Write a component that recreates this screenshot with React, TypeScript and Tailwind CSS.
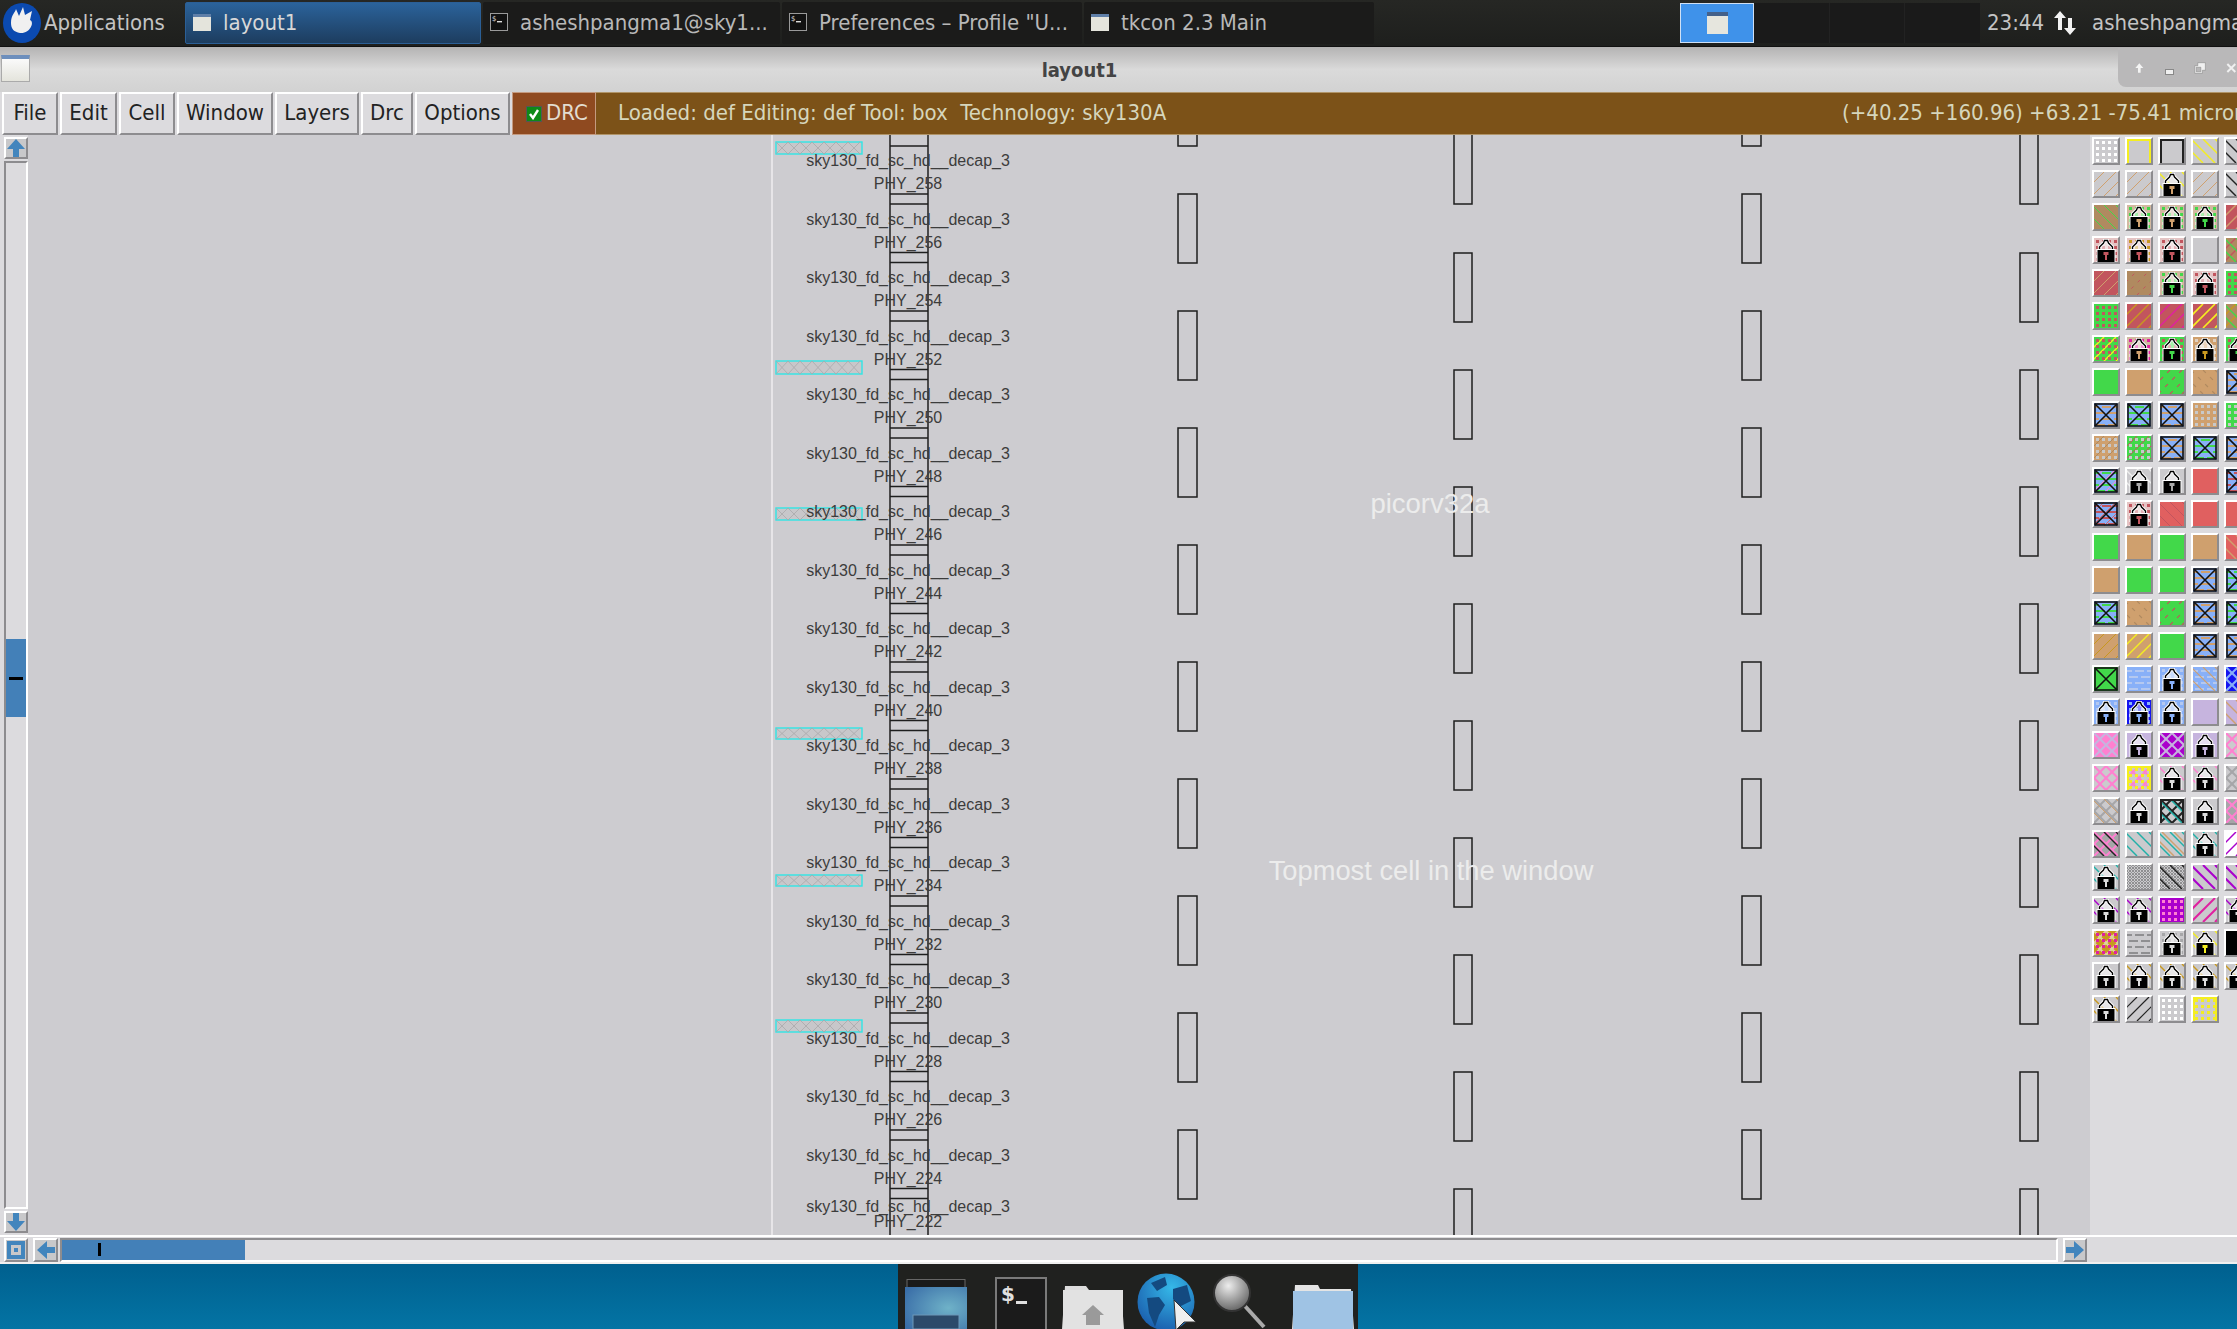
import React from 'react';

const bevel = "border-2 border-t-white border-l-white border-r-[#8d8c8f] border-b-[#8d8c8f]";

const G = '#42d84a', T = '#cfa06e', B = '#b08a60', R = '#c2555e', S = '#e06060', L = '#88b0f8', V = '#c6b4de',
    K = '#ff80d0', M = '#aa00cc', N = '#e020a0', Y = '#f4ee20', E = '#20b0a8', O = '#c89820', A = '#a6a6a8', Z = '#222222';

type Tile = {
    b?: string; f?: string[]; k?: string[]; w?: number; dash?: string; d?: string; h?: string; dense?: string;
    x?: boolean; l?: boolean; key?: string; fr?: string; hz?: string;
};

const X = (b: string, ...f: string[]): Tile => ({b: L, hz: b, f, w: 1, x: true});
const Lk = (b: string | undefined, d?: string, key?: string, k?: string[]): Tile => ({b, d, key, k, l: true});

const rows: Tile[][] = [
    [{d: '#fff'}, {fr: Y}, {fr: Z}, {k: [Y], w: 1.5}, {k: [Z], w: 1.5}],
    [{f: [T], w: 1}, {f: [T], w: 1}, Lk(undefined, undefined, T, [Y]), {f: [T], w: 1}, {k: [Z], w: 1.5}],
    [{b: B, k: [G], w: 1}, Lk('#d2b8a0', G, T), Lk('#d2b8a0', G, T), Lk('#d2b8a0', G, G), {b: R, f: [T]}],
    [Lk('#e4c4c4', R, R), Lk('#e4c4c4', O, R), Lk('#e4c4c4', R, R), {}, {b: B, k: [G], f: [R]}],
    [{b: R, f: [T], w: 1}, {b: B, f: [R], w: 1, dash: '3 6'}, Lk('#d2b8a0', G, G), Lk('#e4c4c4', R, R), {b: G, d: R}],
    [{b: G, d: R}, {b: R, f: [O]}, {b: R, f: [N]}, {b: R, f: [Y], w: 1.6}, {b: B, f: [O], k: [G]}],
    [{b: G, f: [Y], d: R}, Lk('#d2b8a0', N, T), Lk(G, R, G), Lk(T, '#e0d0c0', O), Lk(G, R, G)],
    [{b: G}, {b: T}, {b: G, f: [R], dash: '4 6', w: 1.2}, {b: T, k: [B], dash: '4 6', w: 1.2}, X(T)],
    [X(T), X(G), X(T), {b: T, d: '#c8c8c8'}, {b: G, d: '#c8c8c8'}],
    [{b: T, d: '#c8c8c8', f: [B], w: 1}, {b: G, d: '#c8c8c8', f: [R], w: 1}, X(T), X(G), X(T)],
    [X(G, K), Lk(undefined, undefined, '#aaa', ['#eee']), Lk(undefined, undefined, '#aaa'), {b: S}, X(R)],
    [X(R, S), Lk('#e4c4c4', R, R), {b: S, k: [R], w: 1}, {b: S}, {b: S}],
    [{b: G}, {b: T}, {b: G}, {b: T}, {b: S, k: [T]}],
    [{b: T}, {b: G}, {b: G}, X(T), X(G)],
    [X(G), {b: T, k: [B], dash: '4 6', w: 1.2}, {b: G, f: [R], dash: '4 6', w: 1.2}, X(T), X(G)],
    [{b: T, f: [O], w: 1}, {b: T, f: [Y], w: 1.4}, {b: G}, X(T), X(T)],
    [{b: G, x: true}, {b: L, hz: '#b4c8f0'}, Lk(L, '#b4c8f0', L), {b: L, k: [T], hz: '#b4c8f0', w: 1.2}, {b: '#1414f0', h: L}],
    [Lk(L, '#b4c8f0', L), Lk('#1414f0', L, L), Lk(L, '#b4c8f0', L), {b: V}, {b: V, k: [T]}],
    [{b: K, h: V}, Lk(V, undefined, V), {b: M, h: V}, Lk(V, undefined, V), {h: K}],
    [{h: K}, {fr: Y, h: K, d: Y}, Lk(undefined, undefined, '#ddd', [K]), Lk(undefined, undefined, '#ddd', [K]), {h: A}],
    [{h: A, k: [T], w: 1}, Lk(undefined), {h: Z, k: [E], fr: Z}, Lk(undefined), {b: A, h: K}],
    [{b: A, h: K, k: [Z]}, {k: [E]}, {k: [E, T]}, Lk(undefined, undefined, '#ddd', [E]), {b: '#fff', f: [M]}],
    [Lk(undefined, undefined, '#ddd', [E]), {dense: '#8f8f91'}, {dense: '#8f8f91', k: [Z]}, {k: [M], w: 2}, {k: [M], w: 2}],
    [Lk(undefined, undefined, '#ddd', [M]), Lk(undefined, undefined, '#ddd', [M]), {b: M, d: K}, {f: [N], w: 2}, Lk(undefined, undefined, '#ddd', [M])],
    [{b: O, d: N, h: '#e0d0a0'}, {hz: '#8f8f91'}, Lk(undefined, A), Lk(undefined, undefined, Y, [Y]), {b: '#000'}],
    [Lk(undefined), Lk(undefined, undefined, '#ddd', [O]), Lk(undefined, undefined, '#ddd', [O]), Lk(undefined, undefined, '#ddd', [O]), Lk(undefined, undefined, '#ddd', [O])],
    [Lk(undefined, undefined, '#ddd', [O]), {f: [Z], w: 1.2}, {d: '#fff'}, {d: Y, fr: Y}],
];

function TileArt({t}: { t: Tile }) {
    const offs = [-14, -2, 10, 22];
    const w = t.w ?? 1.5;
    return (
        <svg viewBox="0 0 24 24" className="block w-[24px] h-[24px]" shapeRendering="crispEdges">
            <rect width="24" height="24" fill={t.b ?? '#cbcacd'}/>
            {t.dense && Array.from({length: 16}).map((_, i) => (
                <g key={i} stroke={t.dense} strokeWidth="1">
                    <line x1={i * 3 - 24} y1="24" x2={i * 3} y2="0"/>
                    <line x1={i * 3 - 24} y1="0" x2={i * 3} y2="24"/>
                </g>
            ))}
            {t.h && [-24, -12, 0, 12, 24].map(o => (
                <g key={o} stroke={t.h} strokeWidth="2" shapeRendering="auto">
                    <line x1={o} y1="24" x2={o + 24} y2="0"/>
                    <line x1={o} y1="0" x2={o + 24} y2="24"/>
                </g>
            ))}
            {t.hz && [4, 10, 16, 22].map(y => (
                <line key={y} x1="0" y1={y} x2="24" y2={y} stroke={t.hz} strokeWidth="2.4" strokeDasharray="9 3"
                      strokeDashoffset={y}/>
            ))}
            {t.f?.map((c, i) => offs.map(o => (
                <line key={`f${i}${o}`} x1={o + i * 4} y1="24" x2={o + i * 4 + 24} y2="0" stroke={c} strokeWidth={w}
                      strokeDasharray={t.dash} shapeRendering="auto"/>
            )))}
            {t.k?.map((c, i) => offs.map(o => (
                <line key={`k${i}${o}`} x1={o + i * 4} y1="0" x2={o + i * 4 + 24} y2="24" stroke={c} strokeWidth={w}
                      strokeDasharray={t.dash} shapeRendering="auto"/>
            )))}
            {t.d && [2, 8, 14, 20].map(y => [2, 8, 14, 20].map(x => (
                <rect key={`${x}-${y}`} x={x} y={y} width="3" height="3" fill={t.d}/>
            )))}
            {t.fr && <path d="M1 24V1H23V24" fill="none" stroke={t.fr} strokeWidth="2"/>}
            {t.x && (
                <g fill="none" stroke="#111" strokeWidth="1.6" shapeRendering="auto">
                    <rect x="1" y="1" width="22" height="22"/>
                    <path d="M1 1L23 23M23 1L1 23"/>
                </g>
            )}
            {t.l && (
                <g shapeRendering="auto">
                    <path d="M5.5 13V9L7.5 7L9.5 5L10.5 2.5H13.5L14.5 5L16.5 7L18.5 9V13" fill="#ffffff88" stroke="#fff" strokeWidth="3.2"/>
                    <path d="M5.5 13V9L7.5 7L9.5 5L10.5 2.5H13.5L14.5 5L16.5 7L18.5 9V13" fill="none" stroke="#000" strokeWidth="1.4"/>
                    <rect x="2.5" y="11" width="19" height="13" fill="#fff"/>
                    <rect x="3.5" y="12" width="17" height="12" fill="#000"/>
                    <rect x="9.5" y="14" width="5" height="3" fill={t.key ?? '#d8d8d8'}/>
                    <rect x="11" y="17" width="2" height="5" fill={t.key ?? '#d8d8d8'}/>
                </g>
            )}
        </svg>
    );
}

function WinIcon() {
    return (
        <svg viewBox="0 0 22 22" className="w-[22px] h-[22px] shrink-0">
            <rect x="2" y="3" width="18" height="17" fill="#e4e4dc"/>
            <rect x="2" y="3" width="18" height="3" fill="#5f7fa8"/>
        </svg>
    );
}

function TermIcon() {
    return (
        <svg viewBox="0 0 22 22" className="w-[22px] h-[22px] shrink-0">
            <rect x="2.5" y="2.5" width="17" height="17" fill="#111" stroke="#9a9a9a"/>
            <text x="4" y="10" fontSize="7" fill="#ddd" fontFamily="DejaVu Sans">$</text>
            <rect x="9" y="10" width="5" height="1.4" fill="#ddd"/>
        </svg>
    );
}

function TaskBtn({icon, label, w, active}: { icon: React.ReactNode; label: string; w: string; active?: boolean }) {
    return (
        <div className={`flex items-center h-[42px] pb-[2px] rounded-[2px] overflow-hidden whitespace-nowrap ${w} ${active
            ? 'bg-gradient-to-b from-[#2b639b] to-[#1d3d5f] border border-[#2b5f96] text-[#d8d8d8]'
            : 'bg-[#1b1b1a] text-[#b8b8b8]'}`}>
            <div className="ml-[5px] mr-[10px] flex">{icon}</div>
            {label}
        </div>
    );
}

function MenuBtn({label, w}: { label: string; w: string }) {
    return (
        <div className={`${bevel} ${w} h-[43px] pb-[2px] flex items-center justify-center bg-[#dcdbde] text-[#222] shrink-0`}>
            {label}
        </div>
    );
}

function Arrow({dir}: { dir: 'up' | 'down' | 'left' | 'right' }) {
    const rot = {up: 'rotate-0', down: 'rotate-180', left: '-rotate-90', right: 'rotate-90'}[dir];
    return (
        <svg viewBox="0 0 20 20" className={`w-[20px] h-[20px] ${rot}`}>
            <path d="M10 1L19 11H13V19H7V11H1Z" fill="#4285bd"/>
        </svg>
    );
}

function Canvas() {
    const labels = Array.from({length: 18}).map((_, i) => ({y: 161 + 58.5 * i, y2: 184 + 58.5 * i, name: `PHY_${258 - i * 2}`}));
    labels.push({y: 1207, y2: 1222, name: 'PHY_222'});
    const cyan = [[142, 12], [361, 13], [508, 12], [728, 11], [875, 11], [1020, 12]];
    const ladder: number[] = [146];
    for (let i = 0; i < 18; i++) ladder.push(194 + 58.5 * i, 204 + 58.5 * i);
    return (
        <div className="relative flex-1 h-full overflow-hidden bg-[#cdccd0]">
            <svg className="absolute inset-0 w-full h-full" viewBox="28 135 2062 1100" preserveAspectRatio="xMinYMin slice">
                <line x1="772" y1="135" x2="772" y2="1235" stroke="#efeef0" strokeWidth="1.5"/>
                {cyan.map(([y, h]) => (
                    <g key={y}>
                        <rect x="776" y={y} width="86" height={h} fill="#c8c7ca" stroke="#30e6e6" strokeWidth="1.4"/>
                        {[0, 1, 2, 3, 4, 5, 6].map(i => (
                            <path key={i} d={`M${776 + i * 12} ${y}l12 ${h}M${788 + i * 12} ${y}l-12 ${h}`} stroke="#a9a8ab" strokeWidth="0.8"/>
                        ))}
                    </g>
                ))}
                <g stroke="#1e1e1e" strokeWidth="1.5" fill="none">
                    <line x1="890" y1="135" x2="890" y2="1235"/>
                    <line x1="928" y1="135" x2="928" y2="1235"/>
                    {ladder.map(y => <line key={y} x1="890" y1={y} x2="928" y2={y}/>)}
                    {[1178, 1742].map(x => (
                        <g key={x}>
                            <path d={`M${x} 130V146H${x + 19}V130`}/>
                            {[0, 1, 2, 3, 4, 5, 6, 7, 8].map(i => (
                                <rect key={i} x={x} y={194 + 117 * i} width="19" height="69"/>
                            ))}
                        </g>
                    ))}
                    {[1454, 2020].map(x => (
                        <g key={x}>
                            <path d={`M${x} 130V204H${x + 18}V130`}/>
                            {[0, 1, 2, 3, 4, 5, 6, 7, 8].map(i => (
                                <rect key={i} x={x} y={253 + 117 * i} width="18" height="69"/>
                            ))}
                        </g>
                    ))}
                </g>
            </svg>
            {labels.map(l => (
                <React.Fragment key={l.name}>
                    <div className="absolute w-[300px] -ml-[150px] -mt-[9px] h-[18px] leading-[18px] text-center text-[16px] text-[#3c3c3c] font-['Liberation_Sans',sans-serif]"
                         style={{left: 880, top: l.y - 135}}>sky130_fd_sc_hd__decap_3</div>
                    <div className="absolute w-[300px] -ml-[150px] -mt-[9px] h-[18px] leading-[18px] text-center text-[16px] text-[#3c3c3c] font-['Liberation_Sans',sans-serif]"
                         style={{left: 880, top: l.y2 - 135}}>{l.name}</div>
                </React.Fragment>
            ))}
            <div className="absolute left-[1342px] top-[354px] w-[120px] text-center text-[27.5px] leading-[30px] text-[#ececec] font-['Liberation_Sans',sans-serif]">picorv32a</div>
            <div className="absolute left-[1203px] top-[721px] w-[400px] text-center text-[27.3px] leading-[30px] text-[#ececec] font-['Liberation_Sans',sans-serif]">Topmost cell in the window</div>
        </div>
    );
}

export default function App() {
    return (
        <div className="w-[2237px] h-[1329px] overflow-hidden flex flex-col bg-[#006a9f] text-[22px] font-['DejaVu_Sans_Condensed','DejaVu_Sans',sans-serif]">
            {/* xfce panel */}
            <div className="h-[47px] shrink-0 flex items-center bg-gradient-to-b from-[#262724] to-[#1e1f1d] border-b border-[#111] text-[#c4c4c4] whitespace-nowrap overflow-hidden">
                <svg viewBox="0 0 40 42" className="w-[40px] h-[42px] ml-[2px] shrink-0">
                    <ellipse cx="20" cy="21" rx="19" ry="20" fill="#0b4ab0"/>
                    <path d="M9 21C9 13 13 11 14 7L17 14L21 5L23 13L30 9L28 18C33 20 28 32 18 31C12 30 9 27 9 21Z" fill="#f0f0f0"/>
                </svg>
                <div className="w-[143px] pl-[2px] pb-[2px] shrink-0">Applications</div>
                <div className="flex gap-[2px] w-[1195px] shrink-0">
                    <TaskBtn icon={<WinIcon/>} label="layout1" w="w-[296px]" active/>
                    <TaskBtn icon={<TermIcon/>} label="asheshpangma1@sky1..." w="w-[297px]"/>
                    <TaskBtn icon={<TermIcon/>} label={'Preferences – Profile "U...'} w="w-[300px]"/>
                    <TaskBtn icon={<WinIcon/>} label="tkcon 2.3 Main" w="w-[290px]"/>
                </div>
                <div className="w-[300px] shrink-0 flex ml-[300px]">
                    <div className="w-[74px] h-[40px] bg-[#3f92ea] border border-[#cfe0f5] flex items-center justify-center">
                        <div className="w-[21px] h-[22px] bg-[#e6e6de] border-t-[4px] border-[#44618a]"/>
                    </div>
                    <div className="w-[76px] h-[40px] bg-[#1a1a1a] border-r border-[#222]"/>
                    <div className="w-[75px] h-[40px] bg-[#1a1a1a] border-r border-[#222]"/>
                    <div className="w-[75px] h-[40px] bg-[#1a1a1a]"/>
                </div>
                <div className="w-[65px] ml-[7px] pb-[2px] shrink-0">23:44</div>
                <svg viewBox="0 0 26 26" className="w-[26px] h-[26px] shrink-0">
                    <path d="M8 1L14 8H10V20H6V8H2ZM18 25L12 18H16V8H20V18H24Z" fill="#f2f2f2"/>
                </svg>
                <div className="ml-[14px] pb-[2px]">asheshpangma1</div>
            </div>

            {/* title bar */}
            <div className="relative h-[45px] shrink-0 flex items-center justify-center pr-[78px] bg-gradient-to-b from-[#b4b3b3] via-[#dadada] to-[#d2d2d2] text-[#444] font-bold text-[20px]">
                <div className="absolute left-[1px] top-[8px] w-[29px] h-[27px] border border-[#aaa] bg-gradient-to-b from-[#fafafa] to-[#e4e4dc] border-t-[4px] border-t-[#6d8fbd]"/>
                layout1
                <div className="absolute right-0 top-[1px] w-[119px] h-[39px] rounded-bl-[8px] bg-[#b9b8b9] flex items-center gap-[20px] pl-[16px]">
                    <svg viewBox="0 0 16 16" className="w-[14px] h-[14px]"><path d="M8 1L14 8H10V15H6V8H2Z" fill="#f4f4f4"/></svg>
                    <div className="w-[12px] h-[6px] mt-[8px] bg-[#f0f0f0] border border-[#888]"/>
                    <svg viewBox="0 0 16 16" className="w-[16px] h-[16px]"><path d="M5 1H15V11H11V15H1V5H5ZM3 7V13H9V7Z" fill="#f0f0f0" stroke="#777" strokeWidth="0.6"/></svg>
                    <svg viewBox="0 0 16 16" className="w-[14px] h-[14px]"><path d="M2 2L14 14M14 2L2 14" stroke="#f0f0f0" strokeWidth="3"/></svg>
                </div>
            </div>

            {/* menu bar */}
            <div className="h-[43px] shrink-0 flex pl-[2px] gap-[2px] bg-[#dcdbde] whitespace-nowrap">
                <MenuBtn label="File" w="w-[56px]"/>
                <MenuBtn label="Edit" w="w-[57px]"/>
                <MenuBtn label="Cell" w="w-[56px]"/>
                <MenuBtn label="Window" w="w-[96px]"/>
                <MenuBtn label="Layers" w="w-[84px]"/>
                <MenuBtn label="Drc" w="w-[52px]"/>
                <MenuBtn label="Options" w="w-[95px]"/>
                <div className="w-[84px] shrink-0 h-[43px] pb-[2px] flex items-center gap-[4px] pl-[13px] bg-[#8f4a20] border border-[#c49a80] text-[#e2dcd0]">
                    <div className="w-[16px] h-[16px] mt-[2px] bg-[#0e8a18] border border-[#555] flex items-center justify-center">
                        <svg viewBox="0 0 12 12" className="w-[12px] h-[12px]"><path d="M2 6L5 10L10 2" fill="none" stroke="#fff" strokeWidth="2.4"/></svg>
                    </div>
                    DRC
                </div>
                <div className="flex-1 -ml-[2px] h-[43px] pb-[2px] flex items-center pl-[22px] bg-[#7c5218] border-y border-[#b09468] text-[#d6d6bc] overflow-hidden">
                    <span className="w-[1224px] shrink-0 whitespace-pre">Loaded: def Editing: def Tool: box  Technology: sky130A</span>
                    <span className="shrink-0">(+40.25 +160.96) +63.21 -75.41 microns</span>
                </div>
            </div>

            {/* main */}
            <div className="h-[1100px] shrink-0 flex overflow-hidden">
                <div className="w-[28px] shrink-0 h-full bg-[#dcdbde] flex flex-col pl-[4px] pt-[2px] gap-[2px]">
                    <div className={`${bevel} w-[24px] h-[22px] shrink-0 bg-[#c8c8ca] flex items-center justify-center`}><Arrow dir="up"/></div>
                    <div className="flex-1 w-[24px] border-2 border-t-[#8d8c8f] border-l-[#8d8c8f] border-r-white border-b-white flex flex-col pt-[476px]">
                        <div className="h-[78px] bg-[#4380b8] flex items-center justify-center">
                            <div className="w-[14px] h-[3px] bg-black"/>
                        </div>
                    </div>
                    <div className={`${bevel} w-[24px] h-[22px] shrink-0 mb-[2px] bg-[#c8c8ca] flex items-center justify-center`}><Arrow dir="down"/></div>
                </div>
                <Canvas/>
                <div className="w-[147px] shrink-0 h-full overflow-hidden bg-[#dcdbde] pt-[2px] pl-[2px]">
                    <div className="grid grid-cols-[repeat(5,28px)] gap-x-[5px] gap-y-[5px] w-[170px]">
                        {rows.flatMap((row, r) => row.map((t, c) => (
                            <div key={`${r}-${c}`} className={`${bevel} w-[28px] h-[28px] bg-[#cbcacd]`}>
                                <TileArt t={t}/>
                            </div>
                        )))}
                    </div>
                </div>
            </div>

            {/* horizontal scrollbar */}
            <div className="h-[29px] shrink-0 flex items-center pl-[4px] gap-[5px] bg-[#dcdbde] border-t-2 border-white border-b-2 border-b-[#f0f0f0]">
                <div className={`${bevel} w-[24px] h-[24px] shrink-0 bg-[#c8c8ca] flex items-center justify-center`}>
                    <div className="w-[18px] h-[18px] border-[4px] border-[#4285bd] flex items-center justify-center">
                        <div className="w-[4px] h-[4px] bg-[#4285bd]"/>
                    </div>
                </div>
                <div className={`${bevel} w-[25px] h-[24px] shrink-0 bg-[#c8c8ca] flex items-center justify-center`}><Arrow dir="left"/></div>
                <div className="w-[1998px] -ml-[3px] h-[24px] shrink-0 border-2 border-t-[#8d8c8f] border-l-[#8d8c8f] border-r-white border-b-white">
                    <div className="w-[183px] h-[20px] bg-[#4380b8] flex items-center pl-[36px]">
                        <div className="w-[3px] h-[13px] bg-black"/>
                    </div>
                </div>
                <div className={`${bevel} w-[24px] h-[24px] shrink-0 bg-[#c8c8ca] flex items-center justify-center`}><Arrow dir="right"/></div>
            </div>

            {/* desktop + dock */}
            <div className="relative flex-1 bg-gradient-to-b from-[#00608f] to-[#0474a4] flex justify-center overflow-hidden">
                <div className="ml-[19px] w-[460px] h-[65px] bg-[#20211f] flex items-end pl-[7px] overflow-hidden">
                    <svg viewBox="0 0 62 50" className="w-[62px] h-[50px] shrink-0">
                        <defs>
                            <radialGradient id="win" cx="0.7" cy="0.5" r="0.8">
                                <stop offset="0" stopColor="#6fb2c8"/>
                                <stop offset="1" stopColor="#3a6ea8"/>
                            </radialGradient>
                        </defs>
                        <rect x="2" y="0.5" width="58" height="8" fill="#1a1a1a" stroke="#666"/>
                        <rect x="0" y="8" width="62" height="42" fill="url(#win)"/>
                        <rect x="8" y="36" width="46" height="14" fill="#2c4a6a" stroke="#6d98b8"/>
                    </svg>
                    <svg viewBox="0 0 52 52" className="w-[52px] h-[52px] ml-[28px] shrink-0">
                        <rect x="1" y="1" width="50" height="52" fill="#1b1b1b" stroke="#7a7a7a" strokeWidth="2"/>
                        <text x="6" y="24" fontSize="20" fontWeight="bold" fill="#e0e0e0" fontFamily="DejaVu Sans">$</text>
                        <rect x="21" y="24" width="11" height="3" fill="#e0e0e0"/>
                    </svg>
                    <svg viewBox="0 0 62 48" className="w-[62px] h-[48px] ml-[15px] shrink-0">
                        <path d="M3 5H24L27 9H59L62 48H0Z" fill="#dcdcdc"/>
                        <rect x="1" y="9" width="60" height="39" fill="#e2e2e2"/>
                        <path d="M31 24L42 34H38V44H24V34H20Z" fill="#9a9a9a"/>
                    </svg>
                    <svg viewBox="0 0 58 58" className="w-[58px] h-[58px] ml-[13px] mb-[-2px] shrink-0">
                        <defs>
                            <radialGradient id="globe" cx="0.6" cy="0.25" r="0.8">
                                <stop offset="0" stopColor="#35b8e8"/>
                                <stop offset="1" stopColor="#1a5cac"/>
                            </radialGradient>
                        </defs>
                        <circle cx="29" cy="29" r="28.5" fill="url(#globe)"/>
                        <path d="M10 25L22 24L28 32L22 42L18 54L12 40ZM14 10L28 4L30 12L20 18ZM36 16L50 12L54 28L42 34L36 26Z" fill="#144a80"/>
                    </svg>
                    <svg viewBox="0 0 56 56" className="w-[56px] h-[56px] ml-[17px] shrink-0">
                        <defs>
                            <radialGradient id="lens" cx="0.4" cy="0.3" r="0.8">
                                <stop offset="0" stopColor="#ededed"/>
                                <stop offset="1" stopColor="#555"/>
                            </radialGradient>
                        </defs>
                        <path d="M32 32L52 54" stroke="#aaa" strokeWidth="4"/>
                        <circle cx="20" cy="20" r="18" fill="url(#lens)" stroke="#333" strokeWidth="2"/>
                    </svg>
                    <svg viewBox="0 0 62 48" className="w-[62px] h-[48px] ml-[24px] shrink-0">
                        <path d="M3 4H26L28 8H59L62 48H0Z" fill="#e4e4e4"/>
                        <rect x="1" y="10" width="60" height="38" fill="#9fc3e4"/>
                    </svg>
                </div>
                <svg viewBox="0 0 26 32" className="absolute left-[1172px] top-[36px] w-[26px] h-[32px]">
                    <path d="M2 0L24 22L12 22L4 30Z" fill="#efefef" stroke="#333" strokeWidth="1"/>
                </svg>
            </div>
        </div>
    );
}
